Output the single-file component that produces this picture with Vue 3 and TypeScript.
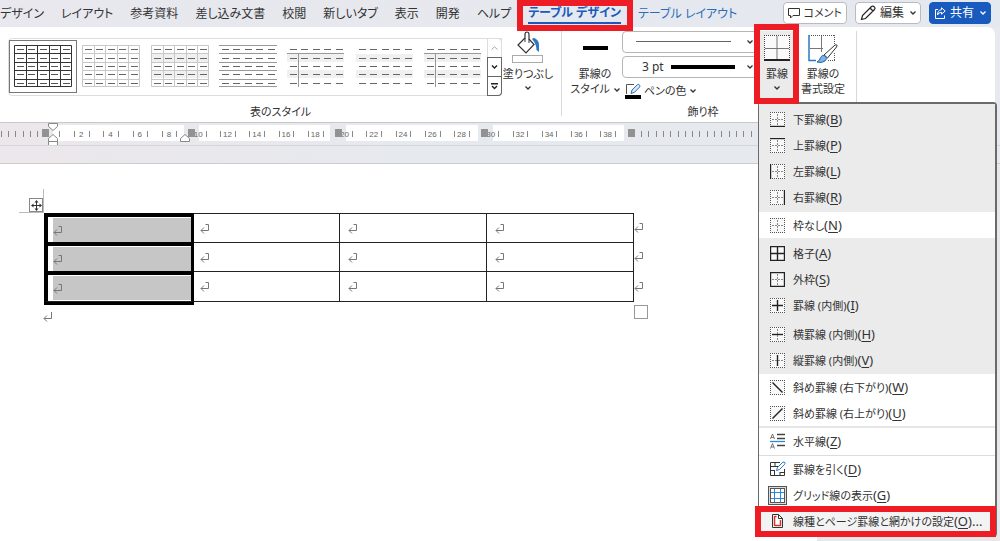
<script setup lang="ts">
import { ref } from 'vue'

const tabs = ['デザイン', 'レイアウト', '参考資料', '差し込み文書', '校閲', '新しいタブ', '表示', '開発', 'ヘルプ']

interface TableStyle {
  name: string
  grid?: string
  rows?: string
  header?: boolean
  shade?: boolean
  dash: string
}
const tableStyles: TableStyle[] = [
  { name: '表 (格子)', grid: '#333', dash: '#555' },
  { name: '表 (格子) 淡色', grid: '#c8c8c8', dash: '#666' },
  { name: '標準の表 1', grid: '#c8c8c8', shade: true, dash: '#666' },
  { name: '標準の表 2', rows: '#999', dash: '#666' },
  { name: '標準の表 3', header: true, shade: true, dash: '#666' },
  { name: '標準の表 4', shade: true, dash: '#666' },
  { name: '標準の表 5', header: true, shade: true, dash: '#666' }
]
const selectedStyle = ref(0)

interface BorderItem {
  label: string
  key: string
  tail?: string
  icon: string
}
interface BorderGroup {
  cls: string
  items: BorderItem[]
}
const groups: BorderGroup[] = [
  {
    cls: 'on pad2',
    items: [
      { label: '下罫線', key: 'B', icon: 'bottom' },
      { label: '上罫線', key: 'P', icon: 'top' },
      { label: '左罫線', key: 'L', icon: 'left' },
      { label: '右罫線', key: 'R', icon: 'right' }
    ]
  },
  { cls: '', items: [{ label: '枠なし', key: 'N', icon: 'none' }] },
  {
    cls: 'on pad2',
    items: [
      { label: '格子', key: 'A', icon: 'all' },
      { label: '外枠', key: 'S', icon: 'outer' },
      { label: '罫線 (内側)', key: 'I', icon: 'inner' }
    ]
  },
  {
    cls: 'on pad1',
    items: [
      { label: '横罫線 (内側)', key: 'H', icon: 'horizontal' },
      { label: '縦罫線 (内側)', key: 'V', icon: 'vertical' }
    ]
  },
  {
    cls: 'line2',
    items: [
      { label: '斜め罫線 (右下がり)', key: 'W', icon: 'down' },
      { label: '斜め罫線 (右上がり)', key: 'U', icon: 'up' }
    ]
  },
  { cls: 'line1', items: [{ label: '水平線', key: 'Z', icon: 'rule' }] },
  {
    cls: 'last',
    items: [
      { label: '罫線を引く', key: 'D', icon: 'draw' },
      { label: 'グリッド線の表示', key: 'G', icon: 'grid' },
      { label: '線種とページ罫線と網かけの設定', key: 'O', tail: '...', icon: 'page' }
    ]
  }
]

const solid: Record<string, string> = {
  bottom: 'M0 14.5H15',
  top: 'M0 .5H15',
  left: 'M.5 0V15',
  right: 'M14.5 0V15',
  none: '',
  all: 'M.5 .5H14.5V14.5H.5ZM7.5 0V15M0 7.5H15',
  outer: 'M.5 .5H14.5V14.5H.5Z',
  inner: 'M7.5 2V13M2 7.5H13',
  horizontal: 'M2 7.5H13',
  vertical: 'M7.5 2V13',
  down: 'M2.5 2.5L12.5 12.5',
  up: 'M2.5 12.5L12.5 2.5'
}
const plainIcons = ['rule', 'draw', 'grid', 'page']

const unit = 7.31
const leftTicks = [1, 8, 15, 23, 30, 37]
const numbers = Array.from({ length: 19 }, (_, i) => ({ n: (i + 1) * 2, x: 81.3 + i * unit * 4 }))
const innerTicks = Array.from({ length: 39 }, (_, i) => Math.round(59.4 + i * unit * 2))
const rightTicks = Array.from({ length: 49 }, (_, i) => Math.round(641 + i * unit))
const columnMarks = [42, 188, 335, 481, 628]
const whiteZones = [
  [53, 131],
  [199, 131],
  [346, 132],
  [493, 131]
]
</script>

<template>
  <div class="word">
    <header class="tabbar">
      <nav class="tabs">
        <button v-for="t in tabs" :key="t" type="button" class="tab">{{ t }}</button>
        <button type="button" class="tab active marked">テーブル デザイン</button>
        <button type="button" class="tab context">テーブル レイアウト</button>
      </nav>
      <div class="actions">
        <button type="button" class="action comment">
          <svg width="12" height="12" viewBox="0 0 12 12"><path d="M.5 1.5H11.500V8.500H5L2.500 11V8.500H.5Z" fill="none" stroke="#333" /></svg>
          コメント
        </button>
        <button type="button" class="action">
          <svg width="16" height="16" viewBox="0 0 16 16"><path d="M1.500 14.500L2.500 10.500L11.500 1.500Q13 .5 14.300 1.800Q15.500 3 14.500 4.500L5.500 13.500ZM10 3L13 6" fill="none" stroke="#222" stroke-width="1.200" /></svg>
          編集
          <svg class="chev" width="6" height="4" viewBox="0 0 6 4"><path d="M.5 .5L3 3L5.500 .5" /></svg>
        </button>
        <button type="button" class="action share">
          <svg width="12" height="12" viewBox="0 0 12 12"><path d="M4 2.500H1.500V11.500H10.500V8.500M7.500 .8L11.200 4L7.500 7.200V5.300Q4.500 5.300 3.500 8Q3.500 3 7.500 2.700Z" fill="none" stroke="#fff" /></svg>
          共有
          <svg class="chev" width="6" height="4" viewBox="0 0 6 4"><path d="M.5 .5L3 3L5.500 .5" /></svg>
        </button>
      </div>
    </header>

    <section class="ribbon">
      <div class="group">
        <div class="body">
          <div class="gallery">
            <button
              v-for="(s, i) in tableStyles"
              :key="s.name"
              type="button"
              class="thumb"
              :class="{ selected: i === selectedStyle }"
              :aria-label="s.name"
              @click="selectedStyle = i"
            >
              <svg width="58" height="43" viewBox="0 0 58 43">
                <template v-if="s.shade">
                  <rect x="0" y="9" width="57" height="8" fill="#f0f0f0" />
                  <rect x="0" y="25" width="57" height="8" fill="#f0f0f0" />
                </template>
                <path v-if="s.grid" d="M.5 .5H57.500V41.500H.5ZM12.500 0V42M23.500 0V42M35.500 0V42M46.500 0V42M0 8.500H58M0 17.500H58M0 25.500H58M0 34.500H58" fill="none" :stroke="s.grid" />
                <path v-if="s.rows" d="M0 .5H58M0 8.500H58M0 17.500H58M0 25.500H58M0 34.500H58M0 41.500H58" :stroke="s.rows" />
                <path v-if="s.header" d="M0 8.500H57M11.500 8V42" stroke="#999" />
                <template v-for="r in 5" :key="r">
                  <rect v-for="c in 5" :key="c" :x="Math.round(3 + (c - 1) * 11.4)" :y="Math.round(4.4 + (r - 1) * 8.3)" width="7" height="1" :fill="s.dash" />
                </template>
              </svg>
            </button>
            <div class="scroller">
              <button type="button" aria-label="上へ" class="dim"><svg width="7" height="4" viewBox="0 0 7 4"><path d="M.5 3.500L3.500 .8L6.500 3.500" fill="none" stroke="#aaa" /></svg></button>
              <button type="button" aria-label="下へ"><svg width="7" height="4" viewBox="0 0 7 4"><path d="M1 .5L3.500 3L6 .5" fill="none" stroke="#222" stroke-width="1.400" /></svg></button>
              <button type="button" aria-label="その他"><svg width="7" height="7" viewBox="0 0 7 7"><path d="M0 .7H7M1 3L3.500 5.500L6 3" fill="none" stroke="#222" stroke-width="1.400" /></svg></button>
            </div>
          </div>
          <button type="button" class="big shading">
            <svg width="32" height="32" viewBox="0 0 32 32">
              <path d="M6 14L13 7V3.500Q13 1 15 1Q17 1 17 3.500V8L22 13.500L14 22Z" fill="#fff" stroke="#333" stroke-width="1.200" />
              <path d="M13 7V11M17 8V12" fill="none" stroke="#333" />
              <path d="M20 8Q21.500 6 24 8Q27 10 27 14V21L24.500 19Q24.500 13 20 8Z" fill="#2b78c5" />
              <rect x=".5" y="24.500" width="30" height="7" fill="#fff" stroke="#aaa" />
            </svg>
            <span>塗りつぶし</span>
            <svg class="chev" width="6" height="4" viewBox="0 0 6 4"><path d="M.5 .5L3 3L5.500 .5" /></svg>
          </button>
        </div>
        <div class="caption">表のスタイル</div>
      </div>

      <div class="group frame">
        <div class="body">
          <button type="button" class="big">
            <svg width="25" height="32" viewBox="0 0 25 32"><rect x="0" y="15" width="25" height="4" fill="#000" /></svg>
            <span>罫線の</span>
            <span>スタイル <svg class="chev" width="6" height="4" viewBox="0 0 6 4"><path d="M.5 .5L3 3L5.500 .5" /></svg></span>
          </button>
          <div class="pens">
            <div class="drop">
              <select aria-label="ペンのスタイル"><option aria-label="実線"></option></select>
              <span class="sample thin"></span>
              <svg class="chev" width="6" height="4" viewBox="0 0 6 4"><path d="M.5 .5L3 3L5.500 .5" /></svg>
            </div>
            <div class="drop">
              <select aria-label="ペンの太さ"><option>3 pt</option></select>
              <span class="sample thick"></span>
              <svg class="chev" width="6" height="4" viewBox="0 0 6 4"><path d="M.5 .5L3 3L5.500 .5" /></svg>
            </div>
            <button type="button" class="pencolor">
              <svg width="16" height="16" viewBox="0 0 16 16">
                <path d="M9 1.500H1.500V11" fill="none" stroke="#555" />
                <path d="M6 10.500L7 7L12.500 1.500Q14 1 14.700 2.300Q15.200 3.500 14.500 4.200L9.500 9.300Z" fill="#d5e8f8" stroke="#2b6cb8" />
                <rect x="0" y="12" width="16" height="4" fill="#000" />
              </svg>
              ペンの色
              <svg class="chev" width="6" height="4" viewBox="0 0 6 4"><path d="M.5 .5L3 3L5.500 .5" /></svg>
            </button>
          </div>
          <button type="button" class="big borders marked">
            <svg width="26" height="32" viewBox="0 0 26 32">
              <rect x="0" y="4" width="26" height="26" fill="#fafafa" />
              <path d="M.5 4V29M25.500 4V29M0 4.500H26" fill="none" stroke="#444" stroke-dasharray="1 1" />
              <path d="M13 5V28M1 17.500H25" stroke="#777" />
              <rect x="0" y="28" width="26" height="2" fill="#222" />
            </svg>
            <span>罫線</span>
            <svg class="chev" width="6" height="4" viewBox="0 0 6 4"><path d="M.5 .5L3 3L5.500 .5" /></svg>
          </button>
          <button type="button" class="big painter">
            <svg width="30" height="32" viewBox="0 0 30 32">
              <path d="M1 4.500H27M26.500 4V14M26.500 22V29M20 29.500H27" fill="none" stroke="#555" stroke-dasharray="1 1" />
              <path d="M13.500 5V21M2 17.500H15" stroke="#777" />
              <path d="M1 4V29.500H8" fill="none" stroke="#2b78c5" stroke-width="1.500" />
              <path d="M16 24L27 14Q30 13 28.500 16L19.500 27Z" fill="#fff" stroke="#333" />
              <path d="M9 31Q12 29.500 12.500 26.500Q14 23 17.500 25Q20 27.500 17 30Q13.500 32.500 9 31Z" fill="#7fb2e5" stroke="#2368ae" />
            </svg>
            <span>罫線の</span>
            <span>書式設定</span>
          </button>
        </div>
        <div class="caption">飾り枠</div>
      </div>
    </section>

    <div class="ruler">
      <svg width="1000" height="23" viewBox="0 0 1000 23">
        <rect v-for="z in whiteZones" :key="z[0]" :x="z[0]" y="2" :width="z[1]" height="16" fill="#fff" />
        <g fill="#888">
          <rect v-for="x in [...leftTicks, ...innerTicks, ...rightTicks]" :key="x" :x="x" y="8" width="1" height="6" />
        </g>
        <text v-for="m in numbers" :key="m.n" :x="m.x" y="14" class="num">{{ m.n }}</text>
        <rect v-for="x in columnMarks" :key="x" :x="x" y="6" width="7" height="8" fill="#929292" />
        <g fill="#fff" stroke="#888">
          <path d="M48.500 .5H57.500V3.500L53 7.500L48.500 3.500Z" />
          <path d="M48.500 18.500V15.500L53 11.500L57.500 15.500V18.500ZM48.500 18.500H57.500V22.500H48.500Z" />
          <path d="M180.500 18.500V15.500L185 11.500L189.500 15.500V18.500Z" />
        </g>
      </svg>
    </div>
    <div class="band"></div>

    <main class="workspace">
      <article class="page">
        <div class="anchor">
          <button type="button" class="handle" aria-label="表の移動">
            <svg width="11" height="11" viewBox="0 0 11 11"><path d="M5.500 1V10M1 5.500H10" stroke="#333" /><path d="M5.500 0L7.500 2.500H3.500ZM5.500 11L3.500 8.500H7.500ZM0 5.500L2.500 3.500V7.500ZM11 5.500L8.500 7.500V3.500Z" fill="#333" /></svg>
          </button>
        </div>
        <div class="tablewrap">
          <table>
            <tbody>
              <tr v-for="r in 3" :key="r">
                <td v-for="c in 5" :key="c">
                  <div><svg width="10" height="11" viewBox="0 0 10 11"><path d="M5.500 1.500H8.500V7.500H1M4 4.500L1 7.500L4 10.500" fill="none" stroke="#777" /></svg></div>
                </td>
              </tr>
            </tbody>
          </table>
          <span class="resize"></span>
        </div>
        <p class="after"><svg width="10" height="11" viewBox="0 0 10 11"><path d="M8.500 1V7.500H1M4 4.500L1 7.500L4 10.500" fill="none" stroke="#777" /></svg></p>
      </article>
      <aside class="pane"></aside>
    </main>

    <div class="menu" role="menu">
      <div v-for="(g, gi) in groups" :key="gi" class="mgroup" :class="g.cls">
        <button v-for="it in g.items" :key="it.key" type="button" role="menuitem" class="item" :class="{ marked: it.icon === 'page' }">
          <span class="ico" :class="{ pressed: it.icon === 'grid' }">
            <svg v-if="!plainIcons.includes(it.icon)" width="15" height="15" viewBox="0 0 15 15">
              <rect width="15" height="15" fill="#f8f8f8" />
              <path d="M.5 0V15M14.500 0V15M0 .5H15M0 14.500H15" stroke="#555" stroke-dasharray="1 1" />
              <path v-if="!['inner', 'down', 'up'].includes(it.icon)" d="M7.500 2V13M2 7.500H13" stroke="#888" stroke-dasharray="2 1" />
              <path :d="solid[it.icon]" fill="none" stroke="#222" stroke-width="1.400" />
            </svg>
            <svg v-else-if="it.icon === 'rule'" width="16" height="16" viewBox="0 0 16 16">
              <path d="M7 1.500H15M7 5.500H15M7 12.500H15" stroke="#444" stroke-width="1.300" />
              <path d="M0 8.500H15" stroke="#2b8ad5" stroke-width="1.300" />
              <path d="M.5 6L2.500 1L4.500 6M1.200 4.500H3.800M.5 15.500L2.500 10.500L4.500 15.500M1.200 14H3.800" fill="none" stroke="#555" stroke-width=".8" />
            </svg>
            <svg v-else-if="it.icon === 'draw'" width="16" height="16" viewBox="0 0 16 16">
              <path d="M10 1.500H.5V14.500H14.500V8M5 1.500V5.500M.5 5.500H8M4.500 9.500V14.500M.5 9.500H5M10 11V14.500M10 11.500H14.500" fill="none" stroke="#333" />
              <path d="M6.500 9.500L7.500 6.500L13 1Q14.500 .5 15 2Q15.300 2.800 14.500 3.500L9.500 8.500Z" fill="#fff" stroke="#2b78c5" />
            </svg>
            <svg v-else-if="it.icon === 'grid'" width="15" height="15" viewBox="0 0 15 15">
              <rect x=".5" y=".5" width="14" height="14" fill="#fff" stroke="#555" />
              <path d="M4.500 1V14M10.500 1V14M1 4.500H14M1 10.500H14" stroke="#2b8ad5" />
            </svg>
            <svg v-else width="15" height="16" viewBox="0 0 15 16">
              <path d="M2.500 1.500H8.500L12.500 5.500V14.500H2.500Z" fill="#fff" stroke="#333" />
              <path d="M8.500 1.500V5.500H12.500" fill="none" stroke="#333" />
              <path d="M4.500 3.500H6.500M4.500 3V13M4.500 12.500H10.500V7" fill="none" stroke="#d8352a" stroke-width="1.500" />
            </svg>
          </span>
          <span class="label">{{ it.label }}<span class="accel">(<u>{{ it.key }}</u>){{ it.tail }}</span></span>
        </button>
      </div>
    </div>
  </div>
</template>

<style>
body {
  margin: 0;
  overflow: hidden;
}
</style>

<style scoped>
.word {
  position: relative;
  display: flex;
  flex-direction: column;
  min-height: 100vh;
  background: #e7e9ee;
  color: #333;
  font: 12px/16px "Noto Sans", "Noto Sans CJK JP", sans-serif;
  font-feature-settings: "palt";
}
button {
  display: flex;
  align-items: center;
  margin: 0;
  padding: 0;
  border: 0;
  background: none;
  color: inherit;
  font: inherit;
  font-feature-settings: inherit;
  white-space: nowrap;
}
svg {
  display: block;
  flex: none;
}
.chev path {
  fill: none;
  stroke: currentColor;
  stroke-width: 1.3;
}
.marked {
  position: relative;
}
.marked::after {
  content: "";
  position: absolute;
  border: 6px solid #ee1c25;
  pointer-events: none;
}
.tabbar {
  display: flex;
  justify-content: space-between;
  height: 27px;
  padding-right: 9px;
  background: linear-gradient(90deg, #e8e8ee, #e4e9ef);
}
.tabs {
  display: flex;
  align-items: flex-start;
  gap: 17px;
  padding-top: 4px;
}
.tab {
  height: 20px;
}
.tab.active {
  color: #185abd;
  font-weight: bold;
  border-bottom: 2px solid #185abd;
}
.tab.active::after {
  inset: -4px -12px -9px -11px;
}
.tab.context {
  color: #2b6cb8;
}
.actions {
  display: flex;
  gap: 8px;
  padding-top: 2px;
}
.action {
  box-sizing: border-box;
  height: 22px;
  padding: 0 4px;
  gap: 4px;
  border: 1px solid #bbb;
  border-radius: 4px;
  background: #fff;
}
.action .chev {
  margin-left: 2px;
}
.action.comment {
  font-size: 11px;
}
.action.share {
  border-color: #185abd;
  background: #185abd;
  color: #fff;
}
.ribbon {
  display: flex;
  box-sizing: border-box;
  height: 96px;
  margin-right: 5px;
  padding-top: 4px;
  border-bottom: 1px solid #c8c8c8;
  border-radius: 0 8px 0 0;
  background: #fff;
  font-size: 11px;
}
.group {
  display: flex;
  flex-direction: column;
  padding-left: 8px;
  padding-right: 8px;
  margin-bottom: 6px;
  border-right: 1px solid #d8d8d8;
}
.body {
  display: flex;
  align-items: flex-start;
  height: 73px;
}
.caption {
  text-align: center;
}
.frame .caption {
  padding-right: 12px;
}
.gallery {
  display: flex;
  align-items: stretch;
  box-sizing: border-box;
  width: 494px;
  height: 58px;
  margin-top: 7px;
  border: 1px solid #ddd;
  border-radius: 4px;
}
.thumb {
  box-sizing: border-box;
  flex: 1;
  justify-content: center;
  margin: 1px 0 2px;
  border: 1px solid transparent;
}
.thumb.selected {
  border-color: #777;
}
.scroller {
  display: flex;
  flex-direction: column;
  width: 15px;
  margin: -1px -1px -1px 0;
}
.scroller button {
  box-sizing: border-box;
  flex: 1;
  justify-content: center;
  border: 1px solid #666;
}
.scroller button + button + button {
  border-top-width: 0;
  border-bottom-right-radius: 4px;
}
.scroller .dim {
  border-color: #ddd;
  border-bottom: 0;
}
.big {
  flex-direction: column;
  width: 50px;
  height: 73px;
  line-height: 15px;
}
.big > svg:first-child {
  margin-bottom: 3px;
}
.big > .chev {
  margin-top: 5px;
}
.big span .chev {
  display: inline-block;
  margin-left: 1px;
  vertical-align: middle;
}
.shading {
  margin-left: 1px;
}
.pens {
  display: flex;
  flex-direction: column;
  gap: 3px;
  width: 136px;
  margin-left: 2px;
}
.drop {
  position: relative;
}
.drop select {
  display: block;
  box-sizing: border-box;
  width: 100%;
  height: 22px;
  padding: 0 19px;
  border: 1px solid #b5b5b5;
  border-radius: 4px;
  background: #fff;
  color: #333;
  font: inherit;
  font-size: 12px;
  appearance: none;
}
.drop .chev {
  position: absolute;
  right: 5px;
  top: 9px;
  pointer-events: none;
}
.sample {
  position: absolute;
  pointer-events: none;
}
.thin {
  left: 14px;
  right: 27px;
  top: 10px;
  height: 1px;
  background: #666;
}
.thick {
  left: 49px;
  right: 23px;
  top: 9px;
  height: 4px;
  background: #000;
}
.pencolor {
  margin: 2px 0 0 3px;
  gap: 3px;
}
.borders {
  width: 38px;
  background: #ebebeb;
}
.borders::after {
  inset: -7px -3px 0 -4px;
  z-index: 3;
}
.painter {
  margin-left: 2px;
}
.group .caption {
  margin-top: auto;
  margin-bottom: -4px;
}
.ruler {
  height: 22px;
  overflow: hidden;
  border-bottom: 1px solid #d4d5da;
  background: linear-gradient(90deg, #ece7eb, #e6e9ee 40%);
}
.num {
  fill: #666;
  font: 8px "Liberation Sans", sans-serif;
  text-anchor: middle;
}
.band {
  height: 17px;
  border-bottom: 1px solid #ccc;
  background: linear-gradient(90deg, #ece7eb, #e6e9ee 40%);
}
.workspace {
  display: flex;
  flex: 1;
}
.page {
  flex: 1;
  padding: 25px 0 0 19px;
  background: #fff;
}
.pane {
  width: 183px;
  background: #e8e8ea;
}
.anchor {
  display: flex;
  align-items: flex-end;
  justify-content: flex-end;
  box-sizing: border-box;
  width: 25px;
  height: 24px;
  border-right: 1px solid #bbb;
  border-bottom: 1px solid #bbb;
}
.handle {
  box-sizing: border-box;
  justify-content: center;
  width: 14px;
  height: 14px;
  border: 1px solid #888;
  background: #fff;
}
.tablewrap {
  position: relative;
  width: 590px;
  margin-left: 25px;
}
table {
  border-spacing: 0;
  table-layout: fixed;
  width: 602px;
}
td {
  box-sizing: border-box;
  width: 147px;
  height: 29px;
  padding: 0 0 0 8px;
  border-top: 1px solid #222;
  border-left: 1px solid #222;
}
tr:last-child td {
  height: 31px;
  border-bottom: 1px solid #222;
}
td:first-child {
  width: 150px;
  height: 29px;
  padding: 1px 0 0 5px;
  border: solid #000;
  border-width: 4px 3px 0 4px;
}
tr:last-child td:first-child {
  border-bottom-width: 1px;
  padding-bottom: 1px;
  box-shadow: 0 3px 0 #000;
}
td:first-child div {
  height: 24px;
  background: #c6c6c6;
}
td div {
  display: flex;
  align-items: center;
}
td:nth-child(2) {
  width: 145px;
  padding-left: 6px;
  border-left: 0;
}
td:nth-child(5),
tr:last-child td:nth-child(5) {
  width: 13px;
  padding-left: 0;
  border-top: 0;
  border-bottom: 0;
}
.resize {
  position: absolute;
  left: 590px;
  top: 92px;
  width: 12px;
  height: 12px;
  border: 1px solid #999;
}
.after {
  margin: 9px 0 0 24px;
}
.menu {
  position: absolute;
  z-index: 1;
  top: 102px;
  left: 758px;
  right: 3px;
  border: 2px solid #6a6a6a;
  border-width: 2px 2px 1px 1px;
  border-radius: 4px;
  background: #fff;
}
.on {
  background: #ebebeb;
}
.pad2 {
  padding: 2px 0;
}
.pad1 {
  padding: 1px 0;
}
.line2 {
  border-bottom: 2px solid #e6e6e6;
}
.line1 {
  padding-bottom: 1px;
  border-bottom: 1px solid #dcdcdc;
}
.last {
  padding-bottom: 2px;
}
.item {
  width: 100%;
  height: 26px;
  gap: 6px;
  padding-left: 9px;
}
.label {
  font-size: 11px;
}
.accel {
  font-size: 13px;
}
.ico {
  display: flex;
  align-items: center;
  justify-content: center;
  box-sizing: border-box;
  width: 19px;
  height: 19px;
}
.pressed {
  border: 1px solid #555;
  background: #ddd;
}
.item.marked {
  background: #f3f3f4;
}
.item.marked::after {
  inset: -2px -1px -3px -4px;
}
u {
  text-underline-offset: 2px;
}
</style>
